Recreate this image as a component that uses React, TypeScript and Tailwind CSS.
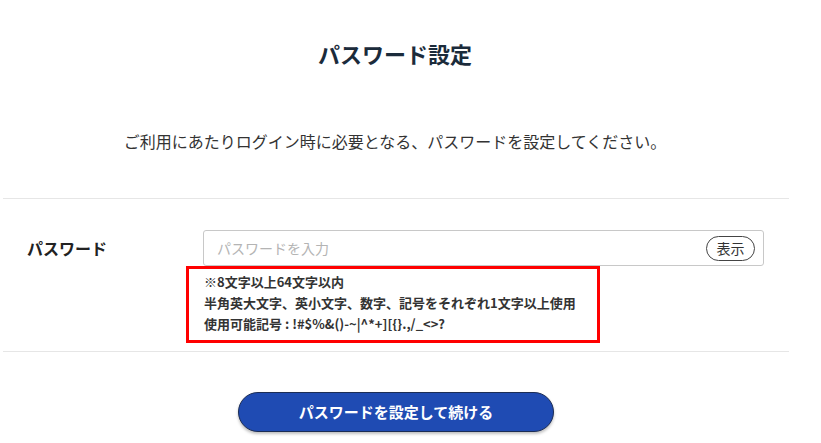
export default function App() {
  const jp = { fontFamily: '"Noto Sans CJK JP", "Noto Sans", sans-serif' };
  return (
    <div className="w-full min-h-[443px] bg-white" style={jp}>
      <div className="w-[790px]">
        <h1 className="pt-[38px] text-center text-[22px] leading-[30px] font-bold text-[#1b2b3b]">
          パスワード設定
        </h1>
        <p className="mt-[61px] text-center text-[16px] leading-[24px] text-[#333]">
          ご利用にあたりログイン時に必要となる、パスワードを設定してください。
        </p>
        <div className="mt-[45px] ml-[3px] w-[786px] border-t border-[#e6e6e6]" />

        <div className="flex items-center pt-[31px] pl-[27px]">
          <div className="w-[176px] text-[16px] font-bold text-[#222]">パスワード</div>
          <div className="flex h-[36px] w-[561px] items-center justify-between rounded-[3px] border border-[#c8c8c8] bg-white pl-[13px] pr-[8px]">
            <span className="text-[14px] text-[#b4b4b4]">パスワードを入力</span>
            <button className="flex h-[25px] w-[49px] items-center justify-center rounded-full border border-[#444] text-[14px] text-[#333]">
              表示
            </button>
          </div>
        </div>

        <div className="ml-[186px] box-border h-[77px] w-[414px] border-[3px] border-[#ff0000] pl-[15px] pt-[2px] text-[13px] font-bold leading-[21px] text-[#333]">
          <div>※8文字以上64文字以内</div>
          <div>半角英大文字、英小文字、数字、記号をそれぞれ1文字以上使用</div>
          <div>{'使用可能記号 : !#$%&()-~|^*+][{}.,/_<>?'}</div>
        </div>

        <div className="mt-[8px] ml-[3px] w-[786px] border-t border-[#e6e6e6]" />

        <button className="mt-[40px] ml-[238px] flex h-[40px] w-[316px] items-center justify-center rounded-full border border-[#1c2d55] bg-[#1f4bb3] text-[15px] font-bold text-white shadow-[0_2px_3px_rgba(0,0,0,0.25)]">
          パスワードを設定して続ける
        </button>
      </div>
    </div>
  );
}
